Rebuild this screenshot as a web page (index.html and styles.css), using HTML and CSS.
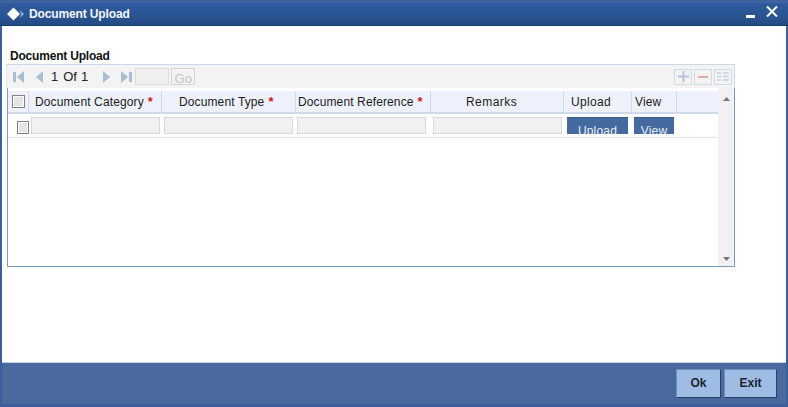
FILE: index.html
```html
<!DOCTYPE html>
<html lang="en">
<head>
    <meta charset="UTF-8">
    <title>Document Upload</title>
    <link rel="stylesheet" href="styles.css">
</head>
<body>
    <div class="window">
        <div class="title-bar">
            <svg class="title-icon" width="18" height="14" viewBox="0 0 18 14"><path d="M7.5 0.5 L14 7 L7.5 13.5 L1 7 Z" fill="#fff"/><path d="M13.5 3 L18 7 L13.5 11 L15.5 7 Z" fill="#9db8dc"/></svg>
            <span class="title-text">Document Upload</span>
            <svg class="win-min" width="9" height="3" viewBox="0 0 9 3"><rect width="9" height="3" fill="#fff"/></svg>
            <svg class="win-close" width="12" height="11" viewBox="0 0 12 11"><path d="M1 0.5 L11 10.5 M11 0.5 L1 10.5" stroke="#fff" stroke-width="2" fill="none"/></svg>
        </div>

        <div class="content">
            <div class="section-title">Document Upload</div>
            <div class="toolbar">
                <svg class="nav-icon first" width="12" height="12" viewBox="0 0 12 12"><rect x="0" y="1" width="3" height="10" fill="#a9bdd4"/><path d="M11 0 V12 L4 6 Z" fill="#a9bdd4"/></svg>
                <svg class="nav-icon prev" width="8" height="12" viewBox="0 0 8 12"><path d="M8 0 V12 L1 6 Z" fill="#a9bdd4"/></svg>
                <span class="page-num">1</span>
                <span class="page-of">Of</span>
                <span class="page-total">1</span>
                <svg class="nav-icon next" width="8" height="12" viewBox="0 0 8 12"><path d="M0 0 V12 L7 6 Z" fill="#a9bdd4"/></svg>
                <svg class="nav-icon last" width="12" height="12" viewBox="0 0 12 12"><path d="M0 0 V12 L7 6 Z" fill="#a9bdd4"/><rect x="8" y="1" width="3" height="10" fill="#a9bdd4"/></svg>
                <div class="page-input"></div>
                <div class="go-btn">Go</div>
                <div class="toolbar-right">
                    <div class="tool-btn"><svg width="11" height="11" viewBox="0 0 11 11"><path d="M4.5 0 H6.5 V4.5 H11 V6.5 H6.5 V11 H4.5 V6.5 H0 V4.5 H4.5 Z" fill="#b3c5da"/></svg></div>
                    <div class="tool-btn"><svg width="10" height="2" viewBox="0 0 10 2"><rect width="10" height="2" fill="#e6a9a9"/></svg></div>
                    <div class="tool-btn"><svg width="12" height="9" viewBox="0 0 12 9"><path d="M0 1 H4 M6 1 H12 M0 4.5 H4 M6 4.5 H12 M0 8 H4 M6 8 H12" stroke="#c5d2e2" stroke-width="1.5"/></svg></div>
                </div>
            </div>

            <div class="grid-frame">
                <div class="grid-main">
                    <div class="grid-row head">
                        <div class="cell col-check"><span class="check"></span></div>
                        <div class="cell col-cat">Document Category<span class="req">*</span></div>
                        <div class="cell col-type">Document Type<span class="req">*</span></div>
                        <div class="cell col-ref">Document Reference<span class="req">*</span></div>
                        <div class="cell col-rem">Remarks</div>
                        <div class="cell col-up">Upload</div>
                        <div class="cell col-view">View</div>
                        <div class="cell"></div>
                    </div>
                    <div class="grid-row body-row">
                        <div class="cell row-check"><span class="check"></span></div>
                        <div class="cell"><div class="field"></div></div>
                        <div class="cell"><div class="field"></div></div>
                        <div class="cell tight"><div class="field"></div></div>
                        <div class="cell"><div class="field"></div></div>
                        <div class="cell wide"><div class="clip upload"><div class="blue-btn">Upload</div></div></div>
                        <div class="cell"><div class="clip view"><div class="blue-btn">View</div></div></div>
                        <div class="cell"></div>
                    </div>
                </div>
                <div class="scrollbar">
                    <svg width="7" height="4" viewBox="0 0 7 4"><path d="M3.5 0 L7 4 H0 Z" fill="#777"/></svg>
                    <svg width="7" height="4" viewBox="0 0 7 4"><path d="M0 0 H7 L3.5 4 Z" fill="#777"/></svg>
                </div>
            </div>
        </div>

        <div class="footer">
            <div class="foot-btn ok">Ok</div>
            <div class="foot-btn exit">Exit</div>
        </div>
    </div>
</body>
</html>
```

FILE: styles.css
```css
html, body {
    margin: 0;
    padding: 0;
}
body {
    width: 788px;
    height: 407px;
    overflow: hidden;
    font-family: "Liberation Sans", Arial, sans-serif;
    font-size: 12px;
    color: #222;
    background-color: #fff;
}
.window {
    width: 788px;
    height: 407px;
    box-sizing: border-box;
    display: flex;
    flex-direction: column;
    border-left: 2px solid #3a5f9a;
    border-right: 2px solid #3a5f9a;
    border-bottom: 3px solid #3a5f9a;
}
.title-bar {
    height: 26px;
    box-sizing: border-box;
    display: flex;
    align-items: center;
    padding-left: 5px;
    padding-right: 2px;
    margin: 0 -2px 0 -2px;
    background: linear-gradient(#2f5b9e, #2a5592 60%, #234a83);
    border-top: 3px solid #3c639f;
    border-bottom: 1px solid #173a6c;
    color: #fff;
}
.title-icon {
    margin-left: 1px;
}
.title-text {
    margin-left: 5px;
    font-size: 12px;
    font-weight: bold;
    letter-spacing: -0.13px;
    color: #f2f5fa;
}
.win-min {
    margin-left: auto;
    margin-top: 5px;
}
.win-close {
    margin-left: 11px;
    margin-right: 8px;
    margin-top: -5px;
}
.content {
    flex: 1;
    padding: 0 51px 0 4px;
}
.section-title {
    margin-top: 22px;
    margin-left: 4px;
    height: 16px;
    line-height: 16px;
    font-weight: bold;
    letter-spacing: -0.2px;
    color: #111;
}
.toolbar {
    height: 24px;
    box-sizing: border-box;
    display: flex;
    align-items: center;
    padding-left: 6px;
    background-color: #f3f3f3;
    border-top: 1px solid #cdd7e5;
    border-left: 1px solid #e2e7ee;
    border-right: 1px solid #cdd7e5;
    font-size: 13px;
}
.nav-icon.prev {
    margin-left: 10px;
}
.page-num {
    margin-left: 8px;
}
.page-of {
    margin-left: 5px;
}
.page-total {
    margin-left: 4px;
}
.nav-icon.next {
    margin-left: 15px;
}
.nav-icon.last {
    margin-left: 10px;
}
.page-input {
    width: 32px;
    height: 15px;
    margin-left: 2px;
    background-color: #efefef;
    border: 1px solid #ddd;
}
.go-btn {
    width: 22px;
    height: 15px;
    margin-left: 2px;
    border: 1px solid #d4d4d4;
    color: #c4c4c4;
    text-align: center;
    line-height: 19px;
    overflow: hidden;
}
.toolbar-right {
    display: flex;
    gap: 2px;
    margin-left: auto;
    margin-right: 2px;
}
.tool-btn {
    width: 16px;
    height: 14px;
    display: flex;
    align-items: center;
    justify-content: center;
    border: 1px solid #d2dbe6;
}
.grid-frame {
    display: flex;
    height: 179px;
    box-sizing: border-box;
    margin-left: 1px;
    padding-top: 3px;
    border-left: 1px solid #7d9cbc;
    border-right: 1px solid #7d9cbc;
    border-bottom: 1px solid #7d9cbc;
}
.grid-main {
    flex: 1;
}
.grid-row {
    display: grid;
    grid-template-columns: 21px 133px 134px 135px 133px 68px 45px 41px;
}
.head {
    height: 23px;
    box-sizing: border-box;
    background-color: #eef1fb;
    border-bottom: 2px solid #cfd9e8;
    color: #1c1c1c;
    letter-spacing: 0.12px;
}
.head .cell {
    display: flex;
    align-items: center;
    border-right: 1px solid #cfd9e8;
    white-space: nowrap;
}
.head .cell:last-child {
    border-right: none;
}
.head .col-check {
    justify-content: center;
}
.head .col-cat {
    padding-left: 6px;
}
.head .col-type {
    padding-left: 17px;
}
.head .col-ref {
    padding-left: 2px;
}
.head .col-rem {
    padding-left: 35px;
    letter-spacing: 0.45px;
}
.head .col-up {
    padding-left: 7px;
    letter-spacing: 0.35px;
}
.head .col-view {
    padding-left: 3px;
}
.req {
    margin-left: 4px;
    color: #d01818;
    font-weight: bold;
    font-size: 13px;
}
.check {
    display: block;
    width: 11px;
    height: 11px;
    background-color: #e4e4e4;
    border: 1px solid #808080;
    box-shadow: inset 0 0 0 1px #fff;
}
.body-row {
    height: 24px;
    box-sizing: border-box;
    border-bottom: 1px solid #dfe5ee;
}
.body-row .cell {
    display: flex;
    align-items: flex-start;
    padding-top: 3px;
    padding-left: 2px;
}
.body-row .tight {
    padding-left: 1px;
}
.body-row .wide {
    padding-left: 3px;
}
.body-row .row-check {
    position: relative;
    padding-top: 7px;
    padding-left: 9px;
}
/* faint line that runs behind the first field */
.body-row .row-check::after {
    content: "";
    position: absolute;
    top: 0;
    bottom: 0;
    left: 29px;
    width: 1px;
    background-color: #eef1f6;
}
.field {
    position: relative;
    z-index: 1;
    width: 127px;
    height: 15px;
    background-color: #f1f1f1;
    border: 1px solid #d8d8d8;
}
.clip {
    height: 17px;
    overflow: hidden;
}
.clip.upload {
    width: 61px;
}
.clip.view {
    width: 40px;
}
.blue-btn {
    height: 25px;
    box-sizing: border-box;
    line-height: 27px;
    background-color: #456a9f;
    border-top: 1px solid #3a5a8c;
    color: #e8eef6;
    text-align: center;
    font-size: 12px;
    letter-spacing: 0.2px;
}
.scrollbar {
    width: 16px;
    display: flex;
    flex-direction: column;
    align-items: center;
    justify-content: space-between;
    padding: 9px 0 5px;
    box-sizing: border-box;
    background-color: #f1f1f1;
    margin-top: -3px;
}
.footer {
    height: 42px;
    box-sizing: border-box;
    display: flex;
    justify-content: flex-end;
    align-items: center;
    gap: 3px;
    padding-right: 9px;
    background-color: #4a6a9f;
    border-top: 1px solid #c6d0de;
}
.foot-btn {
    height: 29px;
    box-sizing: border-box;
    line-height: 27px;
    text-align: center;
    background-color: #9ebce4;
    border: 1px solid #6f8fba;
    border-right-color: #2a4066;
    border-bottom-color: #2a4066;
    font-weight: bold;
    color: #1b2430;
}
.foot-btn.ok {
    width: 45px;
}
.foot-btn.exit {
    width: 53px;
}
```
